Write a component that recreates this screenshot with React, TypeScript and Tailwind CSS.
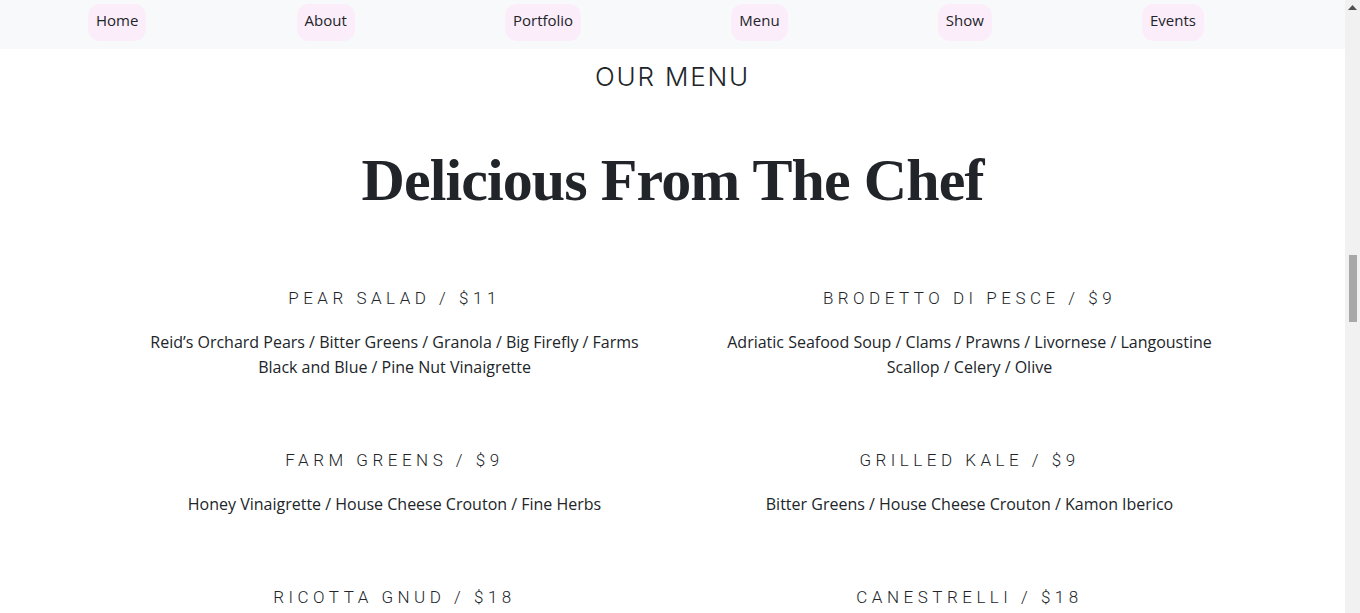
import React from 'react';

const navLinks = ['Home', 'About', 'Portfolio', 'Menu', 'Show', 'Events'];

interface Dish {
  name: string;
  price: string;
  lines: string[];
}

const dishes: Dish[] = [
  {
    name: 'Pear Salad',
    price: '$11',
    lines: ['Reid’s Orchard Pears / Bitter Greens / Granola / Big Firefly / Farms', 'Black and Blue / Pine Nut Vinaigrette'],
  },
  {
    name: 'Brodetto di Pesce',
    price: '$9',
    lines: ['Adriatic Seafood Soup / Clams / Prawns / Livornese / Langoustine', 'Scallop / Celery / Olive'],
  },
  {
    name: 'Farm Greens',
    price: '$9',
    lines: ['Honey Vinaigrette / House Cheese Crouton / Fine Herbs'],
  },
  {
    name: 'Grilled Kale',
    price: '$9',
    lines: ['Bitter Greens / House Cheese Crouton / Kamon Iberico'],
  },
  { name: 'Ricotta Gnud', price: '$18', lines: [] },
  { name: 'Canestrelli', price: '$18', lines: [] },
];

function Nav() {
  return (
    <nav className="sticky top-0 z-10 h-[49px] bg-[#f8f9fa]">
      <ul className="flex items-start justify-between pl-[88px] pr-[141px] pt-[4px]">
        {navLinks.map((link) => (
          <li key={link}>
            <a
              href="#"
              className="block rounded-[12px] bg-[#fcedfb] pb-[9px] pl-[8px] pr-[8px] pt-[5px] text-[15px] leading-[23px] text-[#212529]"
              style={{ fontFamily: '"Open Sans", "Noto Sans", sans-serif' }}
            >
              {link}
            </a>
          </li>
        ))}
      </ul>
    </nav>
  );
}

export default function App() {
  return (
    <div className="flex h-[613px] bg-white text-[#212529]">
      <div className="h-full flex-1 overflow-hidden">
        <Nav />

        <section className="pb-24">
          {/* Section heading */}
          <h3
            className="mt-[13px] text-center text-[26px] font-light leading-[30px] tracking-[0.07em]"
            style={{ fontFamily: 'Inter, "Noto Sans", sans-serif' }}
          >
            OUR MENU
          </h3>
          <h2
            className="mt-[52px] text-center text-[60px] font-bold leading-[72px] tracking-[-0.015em]"
            style={{ fontFamily: '"Liberation Serif", "DejaVu Serif", serif' }}
          >
            Delicious From The Chef
          </h2>

          {/* Dishes */}
          <div className="ml-[107px] mt-[70px] grid w-[1150px] grid-cols-2">
            {dishes.map((dish) => (
              <div key={dish.name} className="mb-[68px] text-center">
                <h4
                  className="text-[17px] font-light uppercase leading-[24px] tracking-[4.5px]"
                  style={{ fontFamily: 'Roboto, "Noto Sans", sans-serif' }}
                >
                  {dish.name} / {dish.price}
                </h4>
                {dish.lines.length > 0 && (
                  <p
                    className="mt-[20px] text-[16px] leading-[25px]"
                    style={{ fontFamily: '"Open Sans", "Noto Sans", sans-serif' }}
                  >
                    {dish.lines.map((line) => (
                      <span key={line} className="block">
                        {line}
                      </span>
                    ))}
                  </p>
                )}
              </div>
            ))}
          </div>
        </section>
      </div>

      {/* Browser scrollbar */}
      <div className="flex w-[15px] flex-col items-center bg-[#f1f1f1]">
        <svg className="mt-[5px] h-[5px] w-[9px]" viewBox="0 0 9 5">
          <path d="M4.5 0L9 5H0z" fill="#505050" />
        </svg>
        <div className="mt-[245px] h-[67px] w-[8px] bg-[#a8a8a8]" />
      </div>
    </div>
  );
}
